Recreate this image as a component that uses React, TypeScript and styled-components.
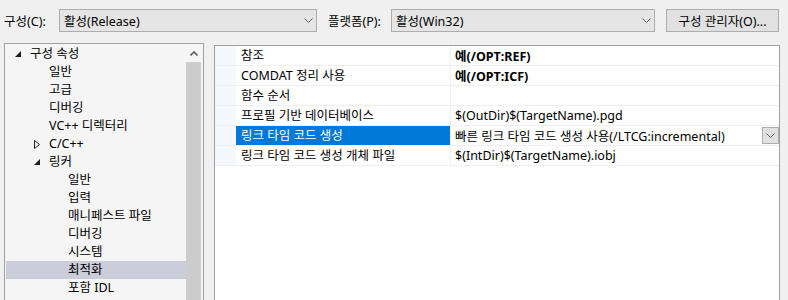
import React from 'react'
import styled, { createGlobalStyle } from 'styled-components'

const GlobalStyle = createGlobalStyle`
  html, body {
    margin: 0;
    padding: 0;
    background: #f0f0f0;
  }
  body {
    font-family: 'Noto Sans', 'Noto Sans CJK KR', sans-serif;
    font-size: 12.5px;
    color: #000;
  }
`

const Page = styled.div`
  width: 788px;
  height: 300px;
  overflow: hidden;
  background: #f0f0f0;
`

const Toolbar = styled.div`
  display: flex;
  align-items: center;
  height: 23px;
  padding: 9px 0 0 4px;
`

const FieldLabel = styled.span<{ $w: number }>`
  width: ${(p) => p.$w}px;
  flex: none;
  white-space: nowrap;
`

const Combo = styled.div<{ $w: number }>`
  box-sizing: border-box;
  width: ${(p) => p.$w}px;
  height: 23px;
  flex: none;
  display: flex;
  align-items: center;
  justify-content: space-between;
  padding: 0 3px 0 4px;
  background: #e5e5e5;
  border: 1px solid #adadad;
  margin-right: 11px;
`

const ToolButton = styled.div`
  box-sizing: border-box;
  width: 113px;
  height: 23px;
  flex: none;
  display: flex;
  align-items: center;
  justify-content: center;
  background: #e1e1e1;
  border: 1px solid #adadad;
`

const Body = styled.div`
  display: flex;
  align-items: flex-start;
  gap: 10px;
  padding: 11px 0 0 4px;
`

const TreePanel = styled.div`
  box-sizing: border-box;
  width: 200px;
  height: 300px;
  flex: none;
  display: flex;
  background: #f5f5f5;
  border: 1px solid #a0a0a0;
`

const TreeList = styled.div`
  flex: 1;
  padding: 1px 0 0 1px;
`

const TreeRow = styled.div<{ $level: number; $selected?: boolean }>`
  position: relative;
  height: 18px;
  line-height: 18px;
  padding-left: ${(p) => 24 + p.$level * 19}px;
  background: ${(p) => (p.$selected ? '#cbcdda' : 'transparent')};
  white-space: nowrap;
`

const Arrow = styled.span<{ $level: number }>`
  position: absolute;
  top: 0;
  left: ${(p) => 9 + p.$level * 19}px;
  height: 18px;
  display: flex;
  align-items: center;
`

const ScrollBar = styled.div`
  width: 15px;
  flex: none;
  display: flex;
  flex-direction: column;
  margin-right: 2px;
`

const ScrollButton = styled.div`
  height: 18px;
  display: flex;
  align-items: center;
  justify-content: center;
`

const ScrollThumb = styled.div`
  flex: 1;
  background: #cdcdcd;
`

const Grid = styled.div`
  box-sizing: border-box;
  width: 566px;
  height: 300px;
  flex: none;
  margin-top: 2px;
  background: #fff;
  border: 1px solid #a0a0a0;
`

const GridRow = styled.div`
  display: flex;
  height: 19px;
  border-bottom: 1px solid #f0f0f0;
`

const Gutter = styled.div`
  width: 21px;
  flex: none;
  background: #f4f7fc;
`

const NameCell = styled.div<{ $selected?: boolean }>`
  box-sizing: border-box;
  width: 215px;
  flex: none;
  padding-left: 5px;
  line-height: 19px;
  white-space: nowrap;
  border-right: 1px solid #f0f0f0;
  background: ${(p) => (p.$selected ? '#0078d7' : 'transparent')};
  color: ${(p) => (p.$selected ? '#fff' : '#000')};
`

const ValueCell = styled.div<{ $bold?: boolean }>`
  flex: 1;
  display: flex;
  align-items: center;
  justify-content: space-between;
  padding-left: 4px;
  white-space: nowrap;
  font-weight: ${(p) => (p.$bold ? 700 : 400)};
`

const DropButton = styled.div`
  box-sizing: border-box;
  width: 17px;
  height: 17px;
  display: flex;
  align-items: center;
  justify-content: center;
  background: #e1e1e1;
  border: 1px solid #adadad;
`

const Chevron = () => (
  <svg width="9" height="5" viewBox="0 0 9 5">
    <polyline points="0.5,0.5 4.5,4.5 8.5,0.5" fill="none" stroke="#606060" strokeWidth="1" />
  </svg>
)

const Expanded = () => (
  <svg width="6" height="6" viewBox="0 0 6 6">
    <polygon points="6,0 6,6 0,6" fill="#1e1e1e" />
  </svg>
)

const Collapsed = () => (
  <svg width="6" height="9" viewBox="0 0 6 9">
    <polygon points="0.5,0.5 5.5,4.5 0.5,8.5" fill="none" stroke="#1e1e1e" strokeWidth="1" />
  </svg>
)

type TreeItem = { label: string; level: number; state?: 'open' | 'closed'; selected?: boolean }

const treeItems: TreeItem[] = [
  { label: '구성 속성', level: 0, state: 'open' },
  { label: '일반', level: 1 },
  { label: '고급', level: 1 },
  { label: '디버깅', level: 1 },
  { label: 'VC++ 디렉터리', level: 1 },
  { label: 'C/C++', level: 1, state: 'closed' },
  { label: '링커', level: 1, state: 'open' },
  { label: '일반', level: 2 },
  { label: '입력', level: 2 },
  { label: '매니페스트 파일', level: 2 },
  { label: '디버깅', level: 2 },
  { label: '시스템', level: 2 },
  { label: '최적화', level: 2, selected: true },
  { label: '포함 IDL', level: 2 },
]

type Prop = { name: string; value: string; bold?: boolean; selected?: boolean }

const props: Prop[] = [
  { name: '참조', value: '예(/OPT:REF)', bold: true },
  { name: 'COMDAT 정리 사용', value: '예(/OPT:ICF)', bold: true },
  { name: '함수 순서', value: '' },
  { name: '프로필 기반 데이터베이스', value: '$(OutDir)$(TargetName).pgd' },
  { name: '링크 타임 코드 생성', value: '빠른 링크 타임 코드 생성 사용(/LTCG:incremental)', selected: true },
  { name: '링크 타임 코드 생성 개체 파일', value: '$(IntDir)$(TargetName).iobj' },
]

export default function App() {
  return (
    <Page>
      <GlobalStyle />
      <Toolbar>
        <FieldLabel $w={55}>구성(C):</FieldLabel>
        <Combo $w={258}>
          <span>활성(Release)</span>
          <Chevron />
        </Combo>
        <FieldLabel $w={63}>플랫폼(P):</FieldLabel>
        <Combo $w={264}>
          <span>활성(Win32)</span>
          <Chevron />
        </Combo>
        <ToolButton>구성 관리자(O)...</ToolButton>
      </Toolbar>
      <Body>
        <TreePanel>
          <TreeList>
            {treeItems.map((item, i) => (
              <TreeRow key={i} $level={item.level} $selected={item.selected}>
                {item.state && (
                  <Arrow $level={item.level}>
                    {item.state === 'open' ? <Expanded /> : <Collapsed />}
                  </Arrow>
                )}
                {item.label}
              </TreeRow>
            ))}
          </TreeList>
          <ScrollBar>
            <ScrollButton>
              <svg width="8" height="5" viewBox="0 0 8 5">
                <polyline points="0.5,4.5 4,1 7.5,4.5" fill="none" stroke="#606060" strokeWidth="1.6" />
              </svg>
            </ScrollButton>
            <ScrollThumb />
          </ScrollBar>
        </TreePanel>
        <Grid>
          {props.map((p, i) => (
            <GridRow key={i}>
              <Gutter />
              <NameCell $selected={p.selected}>{p.name}</NameCell>
              <ValueCell $bold={p.bold}>
                <span>{p.value}</span>
                {p.selected && (
                  <DropButton>
                    <Chevron />
                  </DropButton>
                )}
              </ValueCell>
            </GridRow>
          ))}
        </Grid>
      </Body>
    </Page>
  )
}
